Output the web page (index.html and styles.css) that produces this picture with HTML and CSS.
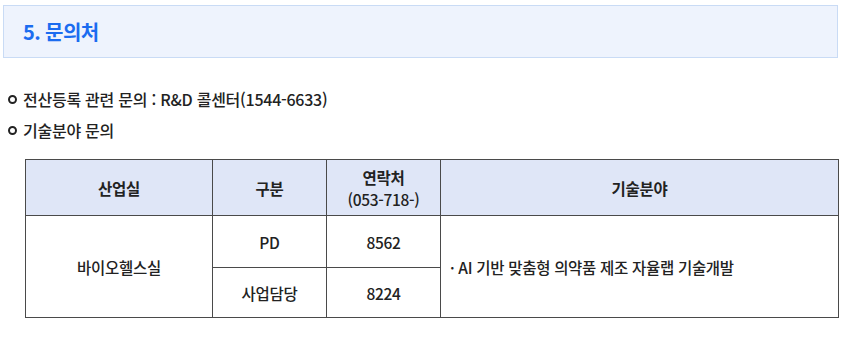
FILE: index.html
```html
<!DOCTYPE html>
<html lang="ko">
<head>
<meta charset="utf-8">
<link rel="stylesheet" href="styles.css">
</head>
<body>
<div class="section-head"><h2 class="section-title">5. 문의처</h2></div>
<ul class="bullets">
  <li class="bullet">전산등록 관련 문의 : R&amp;D 콜센터(1544-6633)</li>
  <li class="bullet">기술분야 문의</li>
</ul>
<table class="contact">
  <colgroup>
    <col class="c1"><col class="c2"><col class="c3"><col class="c4">
  </colgroup>
  <thead>
    <tr class="head-row">
      <th>산업실</th>
      <th>구분</th>
      <th>연락처<br><span class="sub">(053-718-)</span></th>
      <th>기술분야</th>
    </tr>
  </thead>
  <tbody>
    <tr class="row1">
      <td rowspan="2">바이오헬스실</td>
      <td>PD</td>
      <td>8562</td>
      <td rowspan="2" class="field">· AI 기반 맞춤형 의약품 제조 자율랩 기술개발</td>
    </tr>
    <tr class="row2">
      <td>사업담당</td>
      <td>8224</td>
    </tr>
  </tbody>
</table>
</body>
</html>
```
FILE: styles.css
```css
html, body {
  margin: 0;
  padding: 0;
  background: #ffffff;
}
body {
  font-family: "Noto Sans CJK KR", "Noto Sans", sans-serif;
  color: #222;
  width: 842px;
  height: 347px;
  overflow: hidden;
}
.section-head {
  margin: 5px 4px 0 3px;
  height: 51px;
  border: 1px solid #c9dbf5;
  background: #eef3fd;
  display: flex;
  align-items: center;
  padding-left: 19px;
}
.section-title {
  margin: 0;
  font-size: 20px;
  font-weight: 700;
  color: #1b6cf0;
  letter-spacing: -0.6px;
}
.bullets {
  list-style: none;
  margin: 26px 0 0 0;
  padding: 0 0 0 8px;
}
.bullet {
  font-size: 16px;
  font-weight: 500;
  line-height: 31px;
  letter-spacing: -0.25px;
  display: flex;
  align-items: center;
}
.bullet::before {
  content: "";
  width: 5px;
  height: 5px;
  border: 2px solid #222;
  border-radius: 50%;
  margin-right: 6px;
}
.contact {
  margin: 13px 0 0 25px;
  width: 813px;
  border-collapse: collapse;
  table-layout: fixed;
  font-size: 15.5px;
  font-weight: 500;
  letter-spacing: -0.3px;
}
.c1 { width: 187px; }
.c2 { width: 114px; }
.c3 { width: 114px; }
.c4 { width: 398px; }
.contact th, .contact td {
  border: 1px solid #4a4a4a;
  text-align: center;
  padding: 0;
  line-height: 22px;
}
.contact th {
  background: #dfe6f7;
  font-weight: 700;
}
.contact .sub {
  font-weight: 500;
}
.head-row { height: 56px; }
.row1 { height: 52px; }
.row2 { height: 50px; }
.contact td.field {
  text-align: left;
  padding-left: 9px;
}
```
